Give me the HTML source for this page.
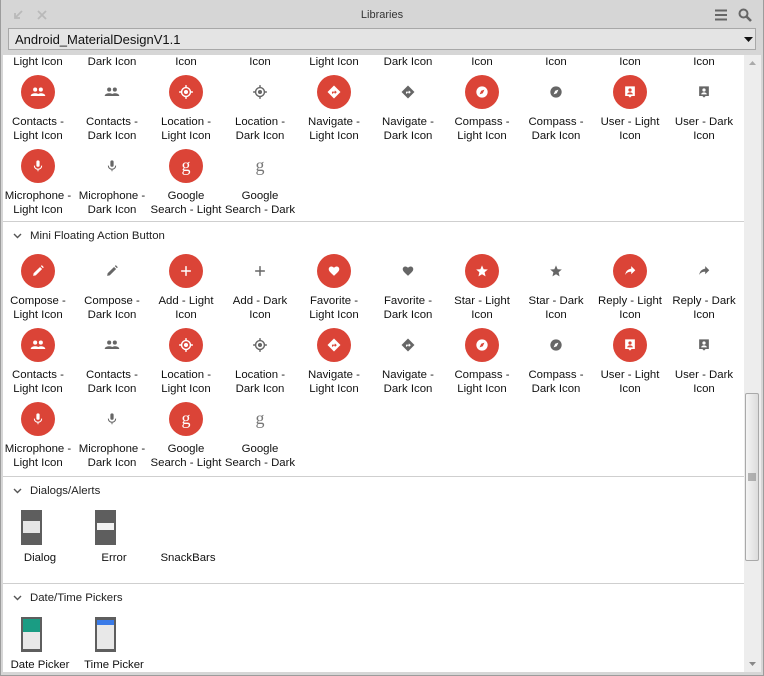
<!DOCTYPE html>
<html><head><meta charset="utf-8"><style>
*{margin:0;padding:0;box-sizing:border-box}
body{width:764px;height:676px;background:#d6d6d6;font-family:"Liberation Sans",Arial,sans-serif;font-size:11px;color:#111;position:relative;overflow:hidden}
.win{position:absolute;left:0;top:0;width:764px;height:676px;border:1px solid #9c9c9c;border-top:none}
.title{position:absolute;top:9px;left:0;width:764px;text-align:center;font-size:11px;color:#333}
.dd{position:absolute;left:8px;top:28px;width:748px;height:22px;background:#e4e4e4;border:1px solid #a8a8a8;font-size:13px;padding:3px 0 0 6px;color:#111}
.content{position:absolute;left:3px;top:55px;width:741px;height:617px;background:#fff;overflow:hidden}
.c{position:absolute;width:74px;text-align:center;line-height:14px;font-size:11.4px;white-space:nowrap}
.i{position:absolute;width:34px;height:34px;left:20px}
.l{position:absolute;left:0;width:74px}
.red{border-radius:50%;background:#db4437}
.hr{position:absolute;left:0;width:741px;height:1px;background:#cfcfcf}
.h{position:absolute;left:27px;font-size:11.4px;color:#222}
.chev{position:absolute;left:10px}
.th{position:absolute;width:21px;height:35px;background:#5e5e5e}
.sb{position:absolute;left:744px;top:55px;width:17px;height:617px;background:#ededed}
.thumb{position:absolute;left:745px;top:393px;width:14px;height:168px;background:linear-gradient(90deg,#f4f4f4,#dcdcdc);border:1px solid #a9a9a9;border-radius:2px}
svg{display:block}
</style></head><body>
<svg width="0" height="0" style="position:absolute">
<defs>
<g id="contacts"><circle cx="8.5" cy="9" r="2.5"/><circle cx="15.5" cy="9" r="2.5"/><path d="M3 17c0-2.5 3-3.5 5.5-3.5S14 14.5 14 17zM11 17c0-2 2-3.5 4.5-3.5S21 14.5 21 17z"/></g>
<g id="loc"><circle cx="12" cy="12" r="2.5"/><circle cx="12" cy="12" r="5.5" fill="none" stroke-width="1.8" stroke="currentColor"/><path d="M11.1 3.5h1.8v3h-1.8zM11.1 17.5h1.8v3h-1.8zM3.5 11.1h3v1.8h-3zM17.5 11.1h3v1.8h-3z"/></g>
<g id="nav"><path d="M12 4l8 8-8 8-8-8z"/><path d="M9.5 14v-2.5h3.5v-1.5l2.5 2.2-2.5 2.2v-1.5h-2v1.1z" fill="#fff"/></g>
<g id="comp"><circle cx="12" cy="12" r="7"/><path d="M15 9l-2 4.5-4 1.5 2-4.5z" fill="#fff"/></g>
<g id="user"><path d="M6 5h12v12h-4l-2 2-2-2H6z"/><circle cx="12" cy="9.5" r="2" fill="#fff"/><path d="M8.5 15c0-1.8 2-2.6 3.5-2.6s3.5.8 3.5 2.6z" fill="#fff"/></g>
<g id="mic"><rect x="10" y="5" width="4" height="8" rx="2"/><path d="M7.5 11.5c0 2.6 2 4.5 4.5 4.5s4.5-1.9 4.5-4.5" fill="none" stroke="currentColor" stroke-width="1.3"/><path d="M11.4 15.5h1.2v3h-1.2z"/></g>
<g id="pen"><path d="M6 18l.6-3.2L14.5 7l2.6 2.6-7.9 7.8z M15.5 6l1.2-1.2 2.5 2.5L18 8.5z"/></g>
<g id="add"><path d="M11.1 6h1.8v12h-1.8zM6 11.1h12v1.8H6z"/></g>
<g id="heart"><path d="M12 18l-1-1c-3.5-3.2-5.5-5-5.5-7.3C5.5 7.9 7 6.5 8.8 6.5c1.1 0 2.3.6 3.2 1.5.9-.9 2.1-1.5 3.2-1.5 1.8 0 3.3 1.4 3.3 3.2 0 2.3-2 4.1-5.5 7.3z"/></g>
<g id="star"><path d="M12 5l2 4.8 5.2.4-4 3.4 1.2 5.1L12 16l-4.4 2.7 1.2-5.1-4-3.4 5.2-.4z"/></g>
<g id="reply"><path d="M13.5 9V6l5 5-5 5v-3c-3.5 0-6 1.2-7.5 4 .6-4 2.5-7.2 7.5-8z"/></g>
</defs></svg>
<div class="win"></div>
<svg style="position:absolute;left:12px;top:9px" width="12" height="12" viewBox="0 0 12 12"><path d="M10 2L3 9M3 4v5h5" stroke="#b9b9b9" stroke-width="1.8" fill="none"/></svg>
<svg style="position:absolute;left:37px;top:10px" width="10" height="10" viewBox="0 0 10 10"><path d="M1 1l8 8M9 1l-8 8" stroke="#b9b9b9" stroke-width="1.8"/></svg>
<div class="title">Libraries</div>
<svg style="position:absolute;left:715px;top:9px" width="12" height="12" viewBox="0 0 12 12"><path d="M0 1.5h12M0 6h12M0 10.5h12" stroke="#666" stroke-width="2"/></svg>
<svg style="position:absolute;left:738px;top:8px" width="14" height="14" viewBox="0 0 14 14"><circle cx="5.5" cy="5.5" r="4" fill="none" stroke="#666" stroke-width="2"/><path d="M8.5 8.5l4.5 4.5" stroke="#666" stroke-width="2.6"/></svg>
<div class="dd">Android_MaterialDesignV1.1</div>
<svg style="position:absolute;left:744px;top:37px" width="9" height="5"><path d="M0 0h9L4.5 5z" fill="#111"/></svg>

<div class="content">
<div class="c" style="left:-2px;top:0px">Light Icon</div>
<div class="c" style="left:72px;top:0px">Dark Icon</div>
<div class="c" style="left:146px;top:0px">Icon</div>
<div class="c" style="left:220px;top:0px">Icon</div>
<div class="c" style="left:294px;top:0px">Light Icon</div>
<div class="c" style="left:368px;top:0px">Dark Icon</div>
<div class="c" style="left:442px;top:0px">Icon</div>
<div class="c" style="left:516px;top:0px">Icon</div>
<div class="c" style="left:590px;top:0px">Icon</div>
<div class="c" style="left:664px;top:0px">Icon</div>

<div class="c" style="left:-2px;top:20px"><div class="i red"><svg width="34" height="34" viewBox="-9 -9 42 42" fill="#fff" color="#fff"><use href="#contacts"/></svg></div><div class="l" style="top:40px">Contacts -<br>Light Icon</div></div>
<div class="c" style="left:72px;top:20px"><div class="i"><svg width="34" height="34" viewBox="-9 -9 42 42" fill="#666"><use href="#contacts"/></svg></div><div class="l" style="top:40px">Contacts -<br>Dark Icon</div></div>
<div class="c" style="left:146px;top:20px"><div class="i red"><svg width="34" height="34" viewBox="-9 -9 42 42" fill="#fff" color="#fff"><use href="#loc"/></svg></div><div class="l" style="top:40px">Location -<br>Light Icon</div></div>
<div class="c" style="left:220px;top:20px"><div class="i"><svg width="34" height="34" viewBox="-9 -9 42 42" fill="#666" color="#666"><use href="#loc"/></svg></div><div class="l" style="top:40px">Location -<br>Dark Icon</div></div>
<div class="c" style="left:294px;top:20px"><div class="i red"><svg width="34" height="34" viewBox="-9 -9 42 42" fill="#fff"><path d="M12 4l8 8-8 8-8-8z"/><path d="M9.5 14v-2.5h3.5v-1.5l2.5 2.2-2.5 2.2v-1.5h-2v1.1z" fill="#db4437"/></svg></div><div class="l" style="top:40px">Navigate -<br>Light Icon</div></div>
<div class="c" style="left:368px;top:20px"><div class="i"><svg width="34" height="34" viewBox="-9 -9 42 42" fill="#666"><use href="#nav"/></svg></div><div class="l" style="top:40px">Navigate -<br>Dark Icon</div></div>
<div class="c" style="left:442px;top:20px"><div class="i red"><svg width="34" height="34" viewBox="-9 -9 42 42" fill="#fff"><circle cx="12" cy="12" r="7"/><path d="M15 9l-2 4.5-4 1.5 2-4.5z" fill="#db4437"/></svg></div><div class="l" style="top:40px">Compass -<br>Light Icon</div></div>
<div class="c" style="left:516px;top:20px"><div class="i"><svg width="34" height="34" viewBox="-9 -9 42 42" fill="#666"><use href="#comp"/></svg></div><div class="l" style="top:40px">Compass -<br>Dark Icon</div></div>
<div class="c" style="left:590px;top:20px"><div class="i red"><svg width="34" height="34" viewBox="-9 -9 42 42" fill="#fff"><path d="M6 5h12v12h-4l-2 2-2-2H6z"/><circle cx="12" cy="9.5" r="2" fill="#db4437"/><path d="M8.5 15c0-1.8 2-2.6 3.5-2.6s3.5.8 3.5 2.6z" fill="#db4437"/></svg></div><div class="l" style="top:40px">User - Light<br>Icon</div></div>
<div class="c" style="left:664px;top:20px"><div class="i"><svg width="34" height="34" viewBox="-9 -9 42 42" fill="#666"><use href="#user"/></svg></div><div class="l" style="top:40px">User - Dark<br>Icon</div></div>

<div class="c" style="left:-2px;top:94px"><div class="i red"><svg width="34" height="34" viewBox="-9 -9 42 42" fill="#fff" color="#fff"><use href="#mic"/></svg></div><div class="l" style="top:40px">Microphone -<br>Light Icon</div></div>
<div class="c" style="left:72px;top:94px"><div class="i"><svg width="34" height="34" viewBox="-9 -9 42 42" fill="#666" color="#666"><use href="#mic"/></svg></div><div class="l" style="top:40px">Microphone -<br>Dark Icon</div></div>
<div class="c" style="left:146px;top:94px"><div class="i red"><svg width="34" height="34"><text x="17" y="22" text-anchor="middle" font-family="Liberation Serif,serif" font-size="18" fill="#fff">g</text></svg></div><div class="l" style="top:40px">Google<br>Search - Light</div></div>
<div class="c" style="left:220px;top:94px"><div class="i"><svg width="34" height="34"><text x="17" y="22" text-anchor="middle" font-family="Liberation Serif,serif" font-size="18" fill="#777">g</text></svg></div><div class="l" style="top:40px">Google<br>Search - Dark</div></div>

<div class="hr" style="top:166px"></div>
<svg class="chev" style="top:178px" width="9" height="6"><path d="M1 1l3.5 3.5L8 1" stroke="#555" stroke-width="1.4" fill="none"/></svg>
<div class="h" style="top:175px">Mini Floating Action Button</div>

<div class="c" style="left:-2px;top:199px"><div class="i red"><svg width="34" height="34" viewBox="-9 -9 42 42" fill="#fff"><use href="#pen"/></svg></div><div class="l" style="top:40px">Compose -<br>Light Icon</div></div>
<div class="c" style="left:72px;top:199px"><div class="i"><svg width="34" height="34" viewBox="-9 -9 42 42" fill="#666"><use href="#pen"/></svg></div><div class="l" style="top:40px">Compose -<br>Dark Icon</div></div>
<div class="c" style="left:146px;top:199px"><div class="i red"><svg width="34" height="34" viewBox="-9 -9 42 42" fill="#fff"><use href="#add"/></svg></div><div class="l" style="top:40px">Add - Light<br>Icon</div></div>
<div class="c" style="left:220px;top:199px"><div class="i"><svg width="34" height="34" viewBox="-9 -9 42 42" fill="#666"><use href="#add"/></svg></div><div class="l" style="top:40px">Add - Dark<br>Icon</div></div>
<div class="c" style="left:294px;top:199px"><div class="i red"><svg width="34" height="34" viewBox="-9 -9 42 42" fill="#fff"><use href="#heart"/></svg></div><div class="l" style="top:40px">Favorite -<br>Light Icon</div></div>
<div class="c" style="left:368px;top:199px"><div class="i"><svg width="34" height="34" viewBox="-9 -9 42 42" fill="#666"><use href="#heart"/></svg></div><div class="l" style="top:40px">Favorite -<br>Dark Icon</div></div>
<div class="c" style="left:442px;top:199px"><div class="i red"><svg width="34" height="34" viewBox="-9 -9 42 42" fill="#fff"><use href="#star"/></svg></div><div class="l" style="top:40px">Star - Light<br>Icon</div></div>
<div class="c" style="left:516px;top:199px"><div class="i"><svg width="34" height="34" viewBox="-9 -9 42 42" fill="#666"><use href="#star"/></svg></div><div class="l" style="top:40px">Star - Dark<br>Icon</div></div>
<div class="c" style="left:590px;top:199px"><div class="i red"><svg width="34" height="34" viewBox="-9 -9 42 42" fill="#fff"><use href="#reply"/></svg></div><div class="l" style="top:40px">Reply - Light<br>Icon</div></div>
<div class="c" style="left:664px;top:199px"><div class="i"><svg width="34" height="34" viewBox="-9 -9 42 42" fill="#666"><use href="#reply"/></svg></div><div class="l" style="top:40px">Reply - Dark<br>Icon</div></div>

<div class="c" style="left:-2px;top:273px"><div class="i red"><svg width="34" height="34" viewBox="-9 -9 42 42" fill="#fff"><use href="#contacts"/></svg></div><div class="l" style="top:40px">Contacts -<br>Light Icon</div></div>
<div class="c" style="left:72px;top:273px"><div class="i"><svg width="34" height="34" viewBox="-9 -9 42 42" fill="#666"><use href="#contacts"/></svg></div><div class="l" style="top:40px">Contacts -<br>Dark Icon</div></div>
<div class="c" style="left:146px;top:273px"><div class="i red"><svg width="34" height="34" viewBox="-9 -9 42 42" fill="#fff" color="#fff"><use href="#loc"/></svg></div><div class="l" style="top:40px">Location -<br>Light Icon</div></div>
<div class="c" style="left:220px;top:273px"><div class="i"><svg width="34" height="34" viewBox="-9 -9 42 42" fill="#666" color="#666"><use href="#loc"/></svg></div><div class="l" style="top:40px">Location -<br>Dark Icon</div></div>
<div class="c" style="left:294px;top:273px"><div class="i red"><svg width="34" height="34" viewBox="-9 -9 42 42" fill="#fff"><path d="M12 4l8 8-8 8-8-8z"/><path d="M9.5 14v-2.5h3.5v-1.5l2.5 2.2-2.5 2.2v-1.5h-2v1.1z" fill="#db4437"/></svg></div><div class="l" style="top:40px">Navigate -<br>Light Icon</div></div>
<div class="c" style="left:368px;top:273px"><div class="i"><svg width="34" height="34" viewBox="-9 -9 42 42" fill="#666"><use href="#nav"/></svg></div><div class="l" style="top:40px">Navigate -<br>Dark Icon</div></div>
<div class="c" style="left:442px;top:273px"><div class="i red"><svg width="34" height="34" viewBox="-9 -9 42 42" fill="#fff"><circle cx="12" cy="12" r="7"/><path d="M15 9l-2 4.5-4 1.5 2-4.5z" fill="#db4437"/></svg></div><div class="l" style="top:40px">Compass -<br>Light Icon</div></div>
<div class="c" style="left:516px;top:273px"><div class="i"><svg width="34" height="34" viewBox="-9 -9 42 42" fill="#666"><use href="#comp"/></svg></div><div class="l" style="top:40px">Compass -<br>Dark Icon</div></div>
<div class="c" style="left:590px;top:273px"><div class="i red"><svg width="34" height="34" viewBox="-9 -9 42 42" fill="#fff"><path d="M6 5h12v12h-4l-2 2-2-2H6z"/><circle cx="12" cy="9.5" r="2" fill="#db4437"/><path d="M8.5 15c0-1.8 2-2.6 3.5-2.6s3.5.8 3.5 2.6z" fill="#db4437"/></svg></div><div class="l" style="top:40px">User - Light<br>Icon</div></div>
<div class="c" style="left:664px;top:273px"><div class="i"><svg width="34" height="34" viewBox="-9 -9 42 42" fill="#666"><use href="#user"/></svg></div><div class="l" style="top:40px">User - Dark<br>Icon</div></div>

<div class="c" style="left:-2px;top:347px"><div class="i red"><svg width="34" height="34" viewBox="-9 -9 42 42" fill="#fff" color="#fff"><use href="#mic"/></svg></div><div class="l" style="top:40px">Microphone -<br>Light Icon</div></div>
<div class="c" style="left:72px;top:347px"><div class="i"><svg width="34" height="34" viewBox="-9 -9 42 42" fill="#666" color="#666"><use href="#mic"/></svg></div><div class="l" style="top:40px">Microphone -<br>Dark Icon</div></div>
<div class="c" style="left:146px;top:347px"><div class="i red"><svg width="34" height="34"><text x="17" y="22" text-anchor="middle" font-family="Liberation Serif,serif" font-size="18" fill="#fff">g</text></svg></div><div class="l" style="top:40px">Google<br>Search - Light</div></div>
<div class="c" style="left:220px;top:347px"><div class="i"><svg width="34" height="34"><text x="17" y="22" text-anchor="middle" font-family="Liberation Serif,serif" font-size="18" fill="#777">g</text></svg></div><div class="l" style="top:40px">Google<br>Search - Dark</div></div>

<div class="hr" style="top:421px"></div>
<svg class="chev" style="top:433px" width="9" height="6"><path d="M1 1l3.5 3.5L8 1" stroke="#555" stroke-width="1.4" fill="none"/></svg>
<div class="h" style="top:430px">Dialogs/Alerts</div>
<div class="th" style="left:18px;top:455px"><div style="position:absolute;left:2px;top:11px;width:17px;height:12px;background:#e6e6e6"></div></div>
<div class="th" style="left:92px;top:455px"><div style="position:absolute;left:2px;top:13px;width:17px;height:7px;background:#f2f2f2"></div></div>
<div class="c" style="left:0px;top:496px">Dialog</div>
<div class="c" style="left:74px;top:496px">Error</div>
<div class="c" style="left:148px;top:496px">SnackBars</div>

<div class="hr" style="top:528px"></div>
<svg class="chev" style="top:540px" width="9" height="6"><path d="M1 1l3.5 3.5L8 1" stroke="#555" stroke-width="1.4" fill="none"/></svg>
<div class="h" style="top:537px">Date/Time Pickers</div>
<div class="th" style="left:18px;top:562px"><div style="position:absolute;left:2px;top:2px;width:17px;height:13px;background:#1a9c83"></div><div style="position:absolute;left:2px;top:15px;width:17px;height:17px;background:#e8e8e8"></div></div>
<div class="th" style="left:92px;top:562px"><div style="position:absolute;left:2px;top:3px;width:17px;height:5px;background:#3a7be8"></div><div style="position:absolute;left:2px;top:8px;width:17px;height:24px;background:#e8e8e8"></div></div>
<div class="c" style="left:0px;top:603px">Date Picker</div>
<div class="c" style="left:74px;top:603px">Time Picker</div>
</div>

<div class="sb"></div>
<svg style="position:absolute;left:749px;top:61px" width="7" height="4"><path d="M0 4h7L3.5 0z" fill="#aaa"/></svg>
<svg style="position:absolute;left:749px;top:662px" width="7" height="4"><path d="M0 0h7L3.5 4z" fill="#888"/></svg>
<div class="thumb"></div>
<svg style="position:absolute;left:748px;top:473px" width="8" height="9"><path d="M0 1h8M0 3h8M0 5h8M0 7h8" stroke="#777"/></svg>
</body></html>
